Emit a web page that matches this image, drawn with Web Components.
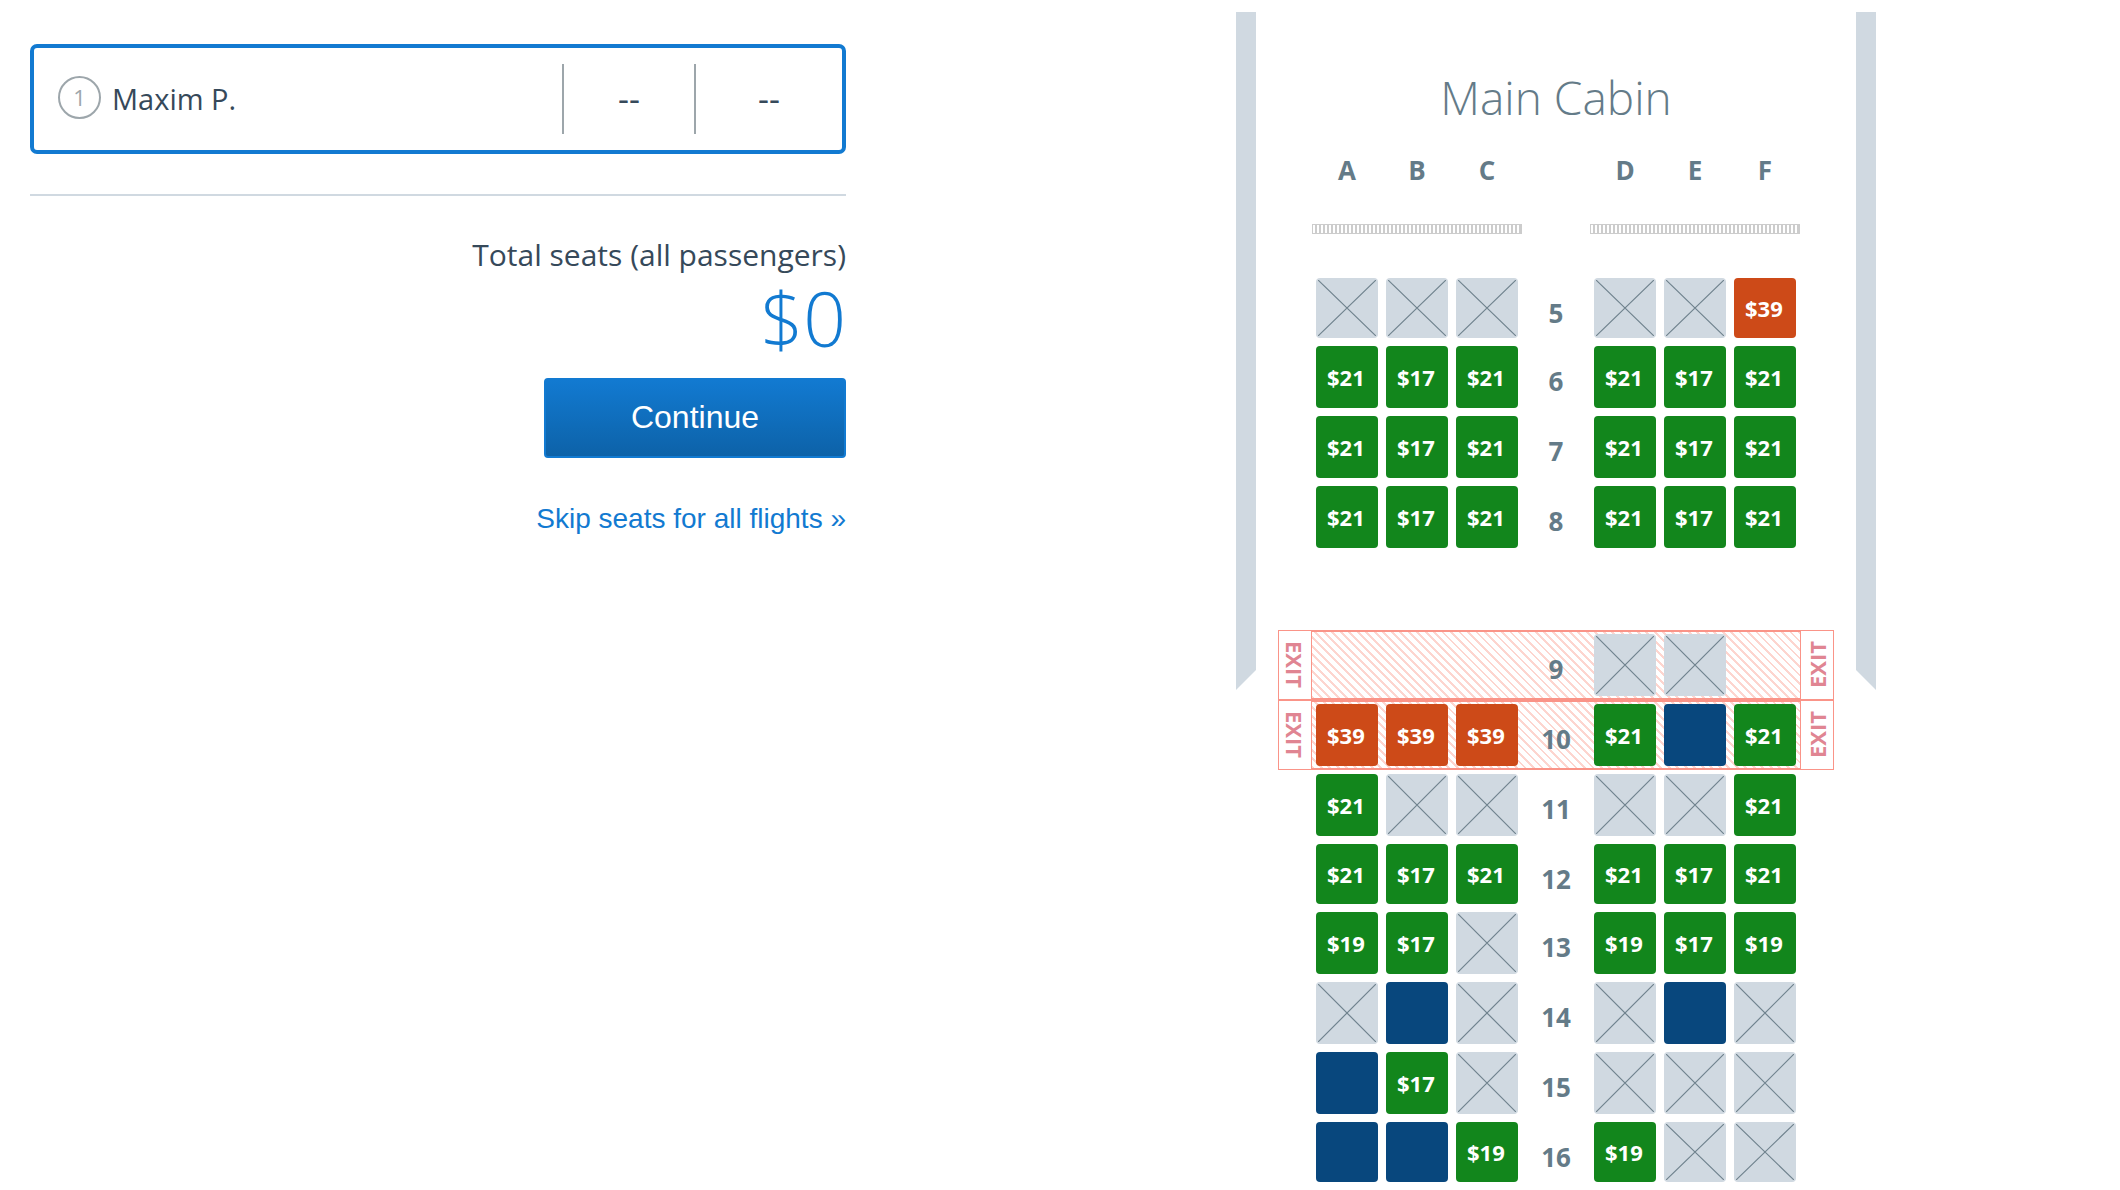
<!DOCTYPE html>
<html lang="en">
<head>
<meta charset="utf-8">
<meta name="viewport" content="width=device-width, initial-scale=1">
<title>Choose your seats</title>
<style>
  html { background: #fff; }
  body { margin: 0; height: 100vh; overflow: hidden; font-family: "Open Sans", "Noto Sans", sans-serif; color: #36495a; }
</style>
</head>
<body>
<seat-page></seat-page>
<script>
const define = (name, css, html, setup) => {
  const template = document.createElement('template');
  template.innerHTML = `<style>*{box-sizing:border-box}${css}</style>${html}`;
  customElements.define(name, class extends HTMLElement {
    constructor() {
      super();
      this.attachShadow({ mode: 'open' }).append(template.content.cloneNode(true));
    }
    connectedCallback() { if (setup) setup(this, this.shadowRoot); }
  });
};

define('passenger-card', `
  :host { display: block; }
  .card { display: flex; align-items: center; height: 110px; padding: 0 0 0 24px; border: 4px solid #127ad1; border-radius: 7px; }
  .num { width: 43px; height: 43px; margin: 0 11px 4px 0; border: 2px solid #9da6ab; border-radius: 50%; color: #9da6ab;
    font: 22px/38px "Open Sans", "Noto Sans", sans-serif; text-align: center; }
  .name { flex: 1; font-size: 29px; line-height: 40px; }
  .cell { height: 70px; border-left: 2px solid #9da6ab; font-size: 34px; line-height: 68px; text-align: center; }
  .seat { width: 132px; } .price { width: 148px; }
`, `<div class="card"><span class="num">1</span><span class="name"><slot></slot></span>
  <span class="cell seat">--</span><span class="cell price">--</span></div>`);

define('seat-total', `
  :host { display: flex; flex-direction: column; align-items: flex-end; }
  .label { font-size: 30px; line-height: 38px; }
  .sum { font-size: 75px; line-height: 88px; font-weight: 300; color: #127ad1; }
  button { width: 302px; height: 80px; margin: 16px 0 0; padding: 0 0 2px; border: 2px solid #127ad1; border-radius: 4px;
    background: linear-gradient(#127ad1, #0d62a8); color: #fff; font: 32px/40px "Liberation Sans", Arial, sans-serif; }
  a { margin-top: 44px; color: #127ad1; text-decoration: none; font: 28px/34px "Liberation Sans", Arial, sans-serif; }
`, `<span class="label">Total seats (all passengers)</span><span class="sum">$0</span>
  <button type="button">Continue</button><a href="#skip">Skip seats for all flights »</a>`);

define('cabin-seat', `
  :host { display: flex; width: 70px; padding: 4px; }
  button { flex: 1; min-width: 0; padding: 0 0 0 11px; border: 0; border-radius: 4px; color: #fff; background: #12861c;
    font: bold 22px/28px "Open Sans", "Noto Sans", sans-serif; text-align: left; }
  .high { background: #cd4a18; }
  .blue { background: #08477d; }
  .taken { padding: 2px; background: #d0d9e1; }
  svg { display: block; width: 100%; height: 100%; stroke: #70838e; stroke-width: 1.2; }
`, ``, (host, root) => {
  const kind = host.getAttribute('kind');
  if (kind === '.') return;
  const button = document.createElement('button');
  button.type = 'button';
  if (kind === 'x') {
    button.className = 'taken';
    button.disabled = true;
    button.innerHTML = '<svg viewBox="0 0 58 58" preserveAspectRatio="none"><path d="M0 0L58 58M58 0L0 58" vector-effect="non-scaling-stroke"/></svg>';
  } else if (kind === 'b') {
    button.className = 'blue';
  } else {
    if (kind === '39') button.className = 'high';
    button.textContent = '$' + kind;
  }
  root.append(button);
});

define('exit-sign', `
  :host { display: flex; align-items: center; justify-content: center; width: 34px; height: 70px; border: 1px solid #fa9488;
    background: #fff; color: #e08592; }
  span { writing-mode: vertical-rl; font: bold 22px/28px "Open Sans", "Noto Sans", sans-serif; }
  :host([side="right"]) span { transform: rotate(180deg); }
`, `<span>EXIT</span>`);

define('seat-row', `
  :host { display: flex; justify-content: center; height: var(--row-height, 70px); }
  .seats { display: flex; width: 488px; }
  .seats > * { flex: none; }
  .number { width: 68px; padding-top: 17px; color: #647b88; font: bold 26px/44px "Open Sans", "Noto Sans", sans-serif; text-align: center; }
  :host([exit]) .seats { border: solid #fa9488; border-width: 2px 0;
    background: repeating-linear-gradient(45deg, #fdd5cf 0 2px, #fff 2px 6px); }
  :host([exit]) .seats > * { margin: -2px 0; }
`, `<div class="seats"></div>`, (host, root) => {
  const seats = root.querySelector('.seats');
  host.getAttribute('seats').split(' ').forEach((kind, i) => {
    if (i === 3) {
      const number = document.createElement('span');
      number.className = 'number';
      number.textContent = host.getAttribute('row');
      seats.append(number);
    }
    const seat = document.createElement('cabin-seat');
    seat.setAttribute('kind', kind);
    seats.append(seat);
  });
  if (host.hasAttribute('exit')) {
    const left = document.createElement('exit-sign');
    const right = document.createElement('exit-sign');
    right.setAttribute('side', 'right');
    seats.before(left);
    seats.after(right);
  }
});

define('cabin-head', `
  :host { display: block; width: 488px; margin: 0 auto; color: #647b88; }
  h2 { margin: 0; font-size: 46px; line-height: 60px; font-weight: 300; text-align: center; }
  .letters { display: flex; margin-top: 25px; font: bold 26px/36px "Open Sans", "Noto Sans", sans-serif; text-align: center; }
  .letters span { width: 70px; }
  .letters span:nth-child(4), .bars i + i { margin-left: 68px; }
  .bars { display: flex; margin: 36px 0 40px; }
  .bars i { width: 210px; height: 10px; border: 1px solid #ccc;
    background: repeating-linear-gradient(90deg, #fff 0 2px, #ccc 2px 4px); }
`, `<h2>Main Cabin</h2>
  <div class="letters"><span>A</span><span>B</span><span>C</span><span>D</span><span>E</span><span>F</span></div>
  <div class="bars"><i></i><i></i></div>`);

define('cabin-map', `
  :host { display: grid; grid-template-columns: 20px 600px 20px; }
  .wall { height: 678px; background: #d0d9e1; clip-path: polygon(0 0, 100% 0, 100% 658px, 0 100%); }
  .wall.right { clip-path: polygon(0 0, 100% 0, 100% 100%, 0 658px); }
  .cabin { padding-top: 55px; }
  .short { --row-height: 68px; }
  .gap { margin-top: 78px; }
`, `<div class="wall"></div><div class="cabin"><cabin-head></cabin-head>
  <seat-row class="short" row="5" seats="x x x x x 39"></seat-row>
  <seat-row row="6" seats="21 17 21 21 17 21"></seat-row>
  <seat-row row="7" seats="21 17 21 21 17 21"></seat-row>
  <seat-row row="8" seats="21 17 21 21 17 21"></seat-row>
  <seat-row class="gap" exit row="9" seats=". . . x x ."></seat-row>
  <seat-row exit row="10" seats="39 39 39 21 b 21"></seat-row>
  <seat-row row="11" seats="21 x x x x 21"></seat-row>
  <seat-row class="short" row="12" seats="21 17 21 21 17 21"></seat-row>
  <seat-row row="13" seats="19 17 x 19 17 19"></seat-row>
  <seat-row row="14" seats="x b x x b x"></seat-row>
  <seat-row row="15" seats="b 17 x x x x"></seat-row>
  <seat-row class="short" row="16" seats="b b 19 19 x x"></seat-row>
  </div><div class="wall right"></div>`);

define('seat-page', `
  :host { display: flex; justify-content: space-between; padding: 12px 244px 0 30px; }
  .side { width: 816px; padding-top: 32px; }
  hr { height: 2px; margin: 40px 0; border: 0; background: #d0d9e1; }
`, `<section class="side"><passenger-card>Maxim P.</passenger-card><hr><seat-total></seat-total></section>
  <cabin-map></cabin-map>`);
</script>
</body>
</html>
